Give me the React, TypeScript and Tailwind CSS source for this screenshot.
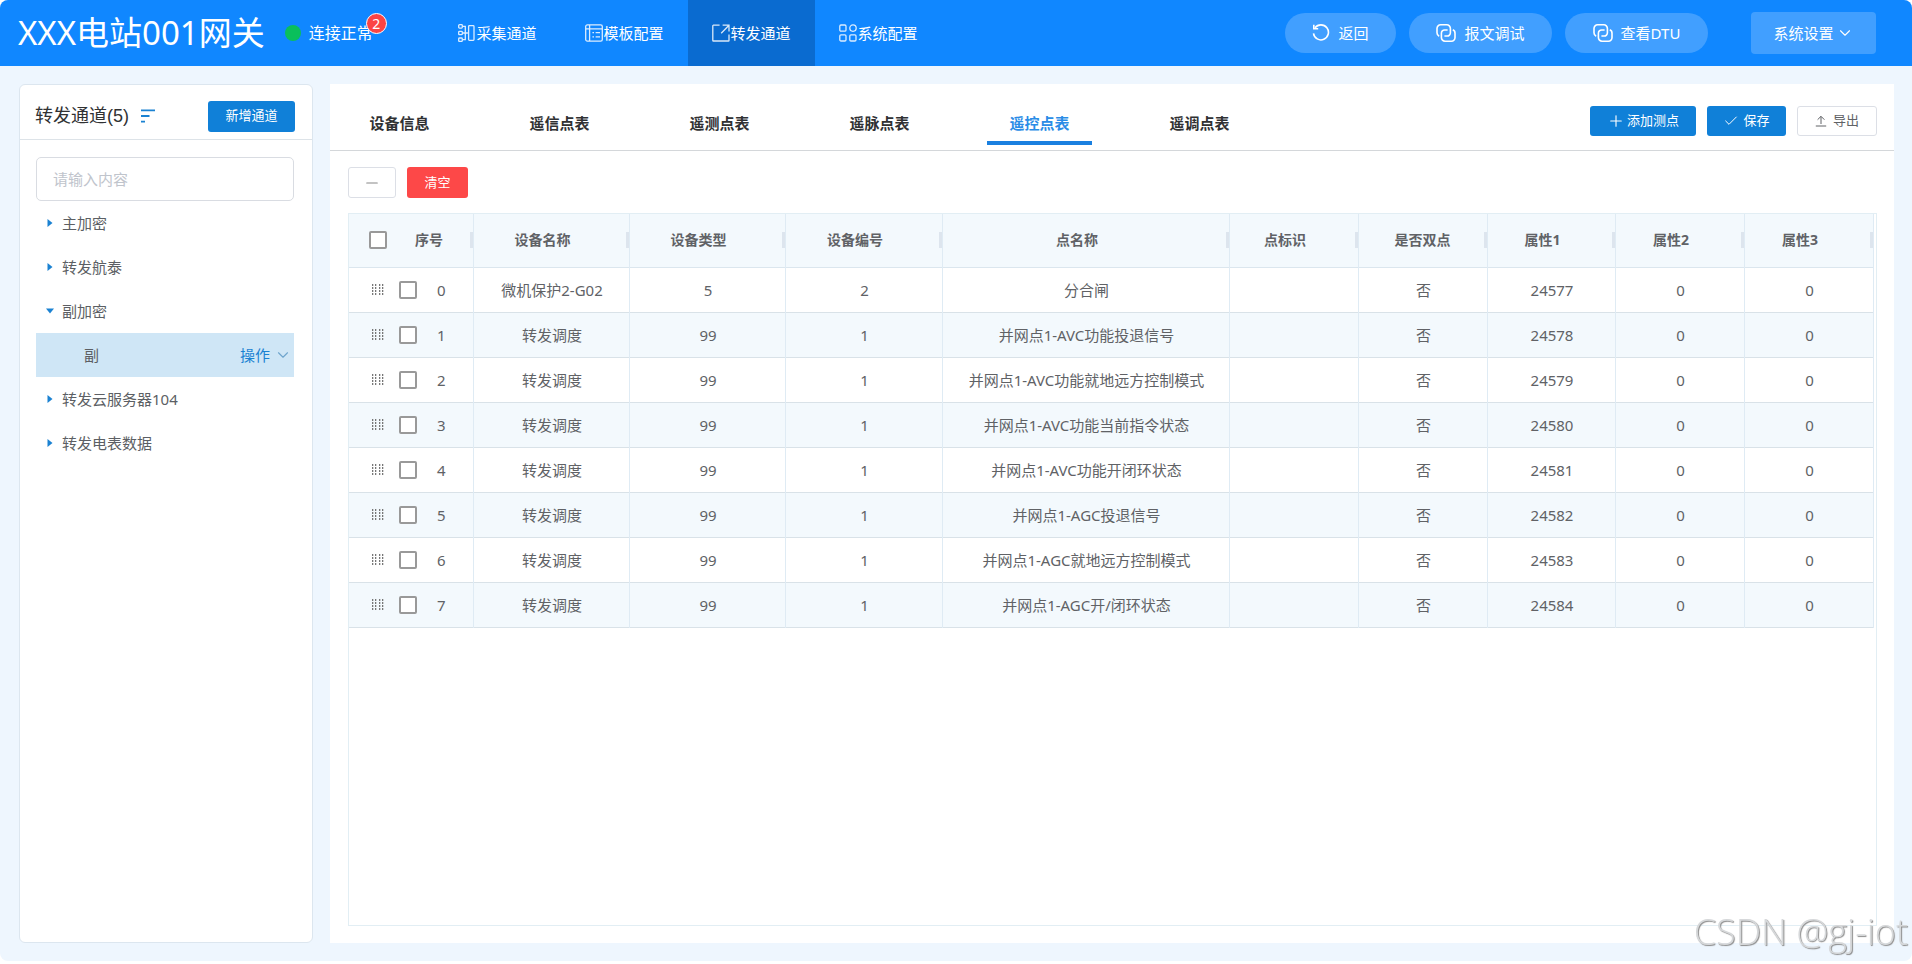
import { Check, ChevronDown, Minus, Plus } from "lucide-react";
import clsx from "clsx";
import type { ReactNode } from "react";

type Point = {
  device: string;
  type: number;
  no: number;
  name: string;
  attr: number;
};

const POINTS: Point[] = [
  { device: "微机保护2-G02", type: 5, no: 2, name: "分合闸", attr: 24577 },
  { device: "转发调度", type: 99, no: 1, name: "并网点1-AVC功能投退信号", attr: 24578 },
  { device: "转发调度", type: 99, no: 1, name: "并网点1-AVC功能就地远方控制模式", attr: 24579 },
  { device: "转发调度", type: 99, no: 1, name: "并网点1-AVC功能当前指令状态", attr: 24580 },
  { device: "转发调度", type: 99, no: 1, name: "并网点1-AVC功能开闭环状态", attr: 24581 },
  { device: "转发调度", type: 99, no: 1, name: "并网点1-AGC投退信号", attr: 24582 },
  { device: "转发调度", type: 99, no: 1, name: "并网点1-AGC就地远方控制模式", attr: 24583 },
  { device: "转发调度", type: 99, no: 1, name: "并网点1-AGC开/闭环状态", attr: 24584 },
];

const COLUMNS = [
  { label: "设备名称", width: "w-[156px]" },
  { label: "设备类型", width: "w-[156px]" },
  { label: "设备编号", width: "w-[157px]" },
  { label: "点名称", width: "w-[287px]" },
  { label: "点标识", width: "w-[129px]" },
  { label: "是否双点", width: "w-[129px]", centered: true },
  { label: "属性1", width: "w-[128px]" },
  { label: "属性2", width: "w-[129px]" },
  { label: "属性3", width: "w-[129px]" },
];

const TABS = ["设备信息", "遥信点表", "遥测点表", "遥脉点表", "遥控点表", "遥调点表"];

const TREE = [
  { label: "主加密" },
  { label: "转发航泰" },
  { label: "副加密", child: "副" },
  { label: "转发云服务器104" },
  { label: "转发电表数据" },
];

function NavIcon({ children }: { children: ReactNode }) {
  return (
    <svg
      viewBox="0 0 18 18"
      className="h-[18px] w-[18px] shrink-0 opacity-85"
      fill="none"
      stroke="currentColor"
      strokeWidth="1.3"
    >
      {children}
    </svg>
  );
}

const NAV = [
  {
    label: "采集通道",
    icon: (
      <NavIcon>
        <rect x="0.7" y="0.7" width="3.6" height="3.4" rx="0.8" />
        <rect x="0.7" y="7.3" width="3.6" height="3.4" rx="0.8" />
        <rect x="0.7" y="14" width="3.6" height="3.4" rx="0.8" />
        <path d="M4.3 2.4h3v13.2h-3M4.3 9h5.6" />
        <rect x="10.6" y="1.6" width="5.4" height="14.8" rx="0.8" />
      </NavIcon>
    ),
  },
  {
    label: "模板配置",
    icon: (
      <NavIcon>
        <rect x="0.7" y="0.9" width="16.6" height="16.2" rx="1.6" />
        <path d="M4.6 1v16M.8 4.8h16.4" />
        <path d="M7.4 8.6h1.6M10.6 8.6h4.4M7.4 12.8h1.6M10.6 12.8h4.4" />
      </NavIcon>
    ),
  },
  {
    label: "转发通道",
    active: true,
    icon: (
      <NavIcon>
        <path d="M7.6 1.2H1.4a.6.6 0 0 0-.6.6v14.6c0 .4.2.6.6.6h15a.6.6 0 0 0 .6-.6v-5.8" />
        <path d="M10.6 1.2H17v6.2M17 1.2 9.2 9.2" />
      </NavIcon>
    ),
  },
  {
    label: "系统配置",
    icon: (
      <NavIcon>
        <rect x="0.8" y="1" width="6.2" height="6.2" rx="1.2" />
        <circle cx="14" cy="4.1" r="3.2" />
        <rect x="0.8" y="10.8" width="6.2" height="6.2" rx="1.2" />
        <rect x="10.8" y="10.8" width="6.2" height="6.2" rx="1.2" />
      </NavIcon>
    ),
  },
];

function BackIcon() {
  return (
    <svg viewBox="0 0 18 18" className="h-[18px] w-[18px]" fill="none" stroke="currentColor" strokeWidth="1.6">
      <path d="M3 3.8A7.500 7.500 0 1 1 1.500 9.400" />
      <path d="M1.800 .8v4h4.400" />
    </svg>
  );
}

function LinkIcon() {
  return (
    <svg viewBox="0 0 20 18" className="h-[18px] w-5" fill="none" stroke="currentColor" strokeWidth="1.6">
      <path d="M3.200 12.200A3.600 3.600 0 0 1 1 8.800V4.400A3.600 3.600 0 0 1 4.600.8h6.200a3.600 3.600 0 0 1 3.600 3.600v4.400a3.200 3.200 0 0 1-3.200 3.200H8.400" />
      <path d="M16.800 5.800A3.600 3.600 0 0 1 19 9.200v4.400a3.600 3.600 0 0 1-3.600 3.600H9a3.600 3.600 0 0 1-3.600-3.600V9.200A3.200 3.200 0 0 1 8.600 6h3" />
    </svg>
  );
}

function DragHandle() {
  return (
    <svg viewBox="0 0 12 12" className="h-3 w-3 fill-[#777]" aria-hidden="true">
      {[0, 3, 7, 10].map((x) =>
        [0, 3, 6, 9].map((y) => <rect key={`${x}-${y}`} x={x} y={y} width="1.3" height="2" />)
      )}
    </svg>
  );
}

function Tick({ label }: { label: string }) {
  return (
    <input
      type="checkbox"
      aria-label={label}
      className="h-[18px] w-[18px] shrink-0 appearance-none rounded-xs border-2 border-[#999] bg-white checked:bg-[#1080d8]"
    />
  );
}

function Header() {
  return (
    <header className="flex h-[66px] shrink-0 items-center rounded-t-lg bg-[#1087ff] pr-9 pl-[18px] text-white">
      <div className="flex w-[416px] shrink-0 items-center">
        <h1 className="text-[33px] leading-10 whitespace-nowrap">XXX电站001网关</h1>
        <span className="ml-5 h-4 w-4 rounded-full bg-[#0abf5b]" />
        <span className="relative ml-2 text-base leading-5">
          连接正常
          <span className="absolute -top-2.5 -right-3.5 flex h-[21px] w-[21px] items-center justify-center rounded-full border border-white bg-[#fb4444] text-sm leading-none">
            2
          </span>
        </span>
      </div>

      <nav className="flex h-full">
        {NAV.map((item) => (
          <a
            key={item.label}
            href="#"
            className={clsx(
              "flex w-[127px] items-center justify-center text-[15px]",
              item.active && "bg-[#0a6bd0]"
            )}
          >
            {item.icon}
            <span>{item.label}</span>
          </a>
        ))}
      </nav>

      <div className="ml-auto flex items-center gap-[13px] text-[15px]">
        <button type="button" className="flex h-10 w-[111px] items-center justify-center gap-2 rounded-full bg-[#419fff]">
          <BackIcon />
          返回
        </button>
        <button type="button" className="flex h-10 w-[143px] items-center justify-center gap-2 rounded-full bg-[#419fff]">
          <LinkIcon />
          报文调试
        </button>
        <button type="button" className="flex h-10 w-[143px] items-center justify-center gap-2 rounded-full bg-[#419fff]">
          <LinkIcon />
          查看DTU
        </button>
        <button type="button" className="ml-[30px] flex h-[42px] w-[125px] items-center justify-center gap-0.5 rounded-sm bg-[#419fff]">
          系统设置
          <ChevronDown className="h-[18px] w-[18px]" strokeWidth={1.5} />
        </button>
      </div>
    </header>
  );
}

function Sidebar() {
  return (
    <aside className="flex w-[294px] shrink-0 flex-col rounded-md border border-[#dce6ef] bg-white">
      <div className="flex h-[55px] items-center border-b border-[#dde3e8] pt-2 pr-[17px] pl-[15px]">
        <h2 className="font-['Liberation_Sans','Noto_Sans_CJK_SC',sans-serif] text-lg text-[#303133]">转发通道(5)</h2>
        <svg viewBox="0 0 14 14" className="ml-3 h-3.5 w-3.5" fill="none" stroke="#1b82d2" strokeWidth="1.8">
          <path d="M0 1.400h14M0 7h8.500M0 12.600h4" />
        </svg>
        <button type="button" className="ml-auto h-[31px] w-[87px] rounded-[3px] bg-[#1080d8] text-[13px] text-white">
          新增通道
        </button>
      </div>

      <div className="pt-[17px] pr-[18px] pl-4 text-[15px] text-[#5c5f64]">
        <input
          type="text"
          aria-label="搜索通道"
          placeholder="请输入内容"
          className="h-11 w-full rounded-[5px] border border-[#d9dce2] px-4 placeholder:text-[#c0c4cc]"
        />
        <ul>
          {TREE.map((node) => (
            <li key={node.label}>
              <button type="button" className="flex h-11 w-full items-center gap-2 pl-2.5 text-left">
                <svg viewBox="0 0 8 8" className={clsx("h-2 w-2 fill-[#1b82d2]", node.child && "rotate-90")}>
                  <path d="M1.500 0 6.500 4l-5 4z" />
                </svg>
                {node.label}
              </button>
              {node.child && (
                <div className="flex h-11 items-center justify-between bg-[#cfe6f6] pr-0.5 pl-12">
                  <span>{node.child}</span>
                  <button type="button" className="flex items-center gap-1 text-[#1b82d2]">
                    操作
                    <ChevronDown className="h-[18px] w-[18px] text-[#6fa5cd]" strokeWidth={1.5} />
                  </button>
                </div>
              )}
            </li>
          ))}
        </ul>
      </div>
    </aside>
  );
}

function PointTable() {
  return (
    <div className="flex-1 border border-[#e2eef4] pr-[3px]">
      <table className="w-full table-fixed border-collapse text-center text-[15px] text-[#606266]">
        <thead>
          <tr className="h-[53px] border-b border-[#dbe6ee] bg-[#f3f9fd] text-sm">
            <th className="w-[124px] border-r border-[#dfebf4] p-0">
              <div className="flex items-center pl-5">
                <Tick label="全选" />
                <span className="ml-7">序号</span>
                <span className="ml-auto h-4 w-[3px] bg-[#dde5ee]" />
              </div>
            </th>
            {COLUMNS.map((col) => (
              <th key={col.label} className={clsx(col.width, "border-r border-[#dfebf4] p-0")}>
                <div className="flex items-center">
                  <span className={clsx("flex-1", col.centered ? "pl-[3px]" : "pr-[14px]")}>{col.label}</span>
                  <span className="h-4 w-[3px] bg-[#dde5ee]" />
                </div>
              </th>
            ))}
          </tr>
        </thead>
        <tbody className="[&_td]:border-r [&_td]:border-[#dfebf4] [&_td]:p-0 [&_td+td]:pt-0.5 [&_td+td]:pl-0.5">
          {POINTS.map((p, i) => (
            <tr key={p.attr} className="h-[45px] border-b border-[#d9e2e8] even:bg-[#f3f9fd]">
              <td>
                <div className="flex items-center pl-[23px]">
                  <DragHandle />
                  <span className="ml-[15px] flex">
                    <Tick label={`选择第${i}行`} />
                  </span>
                  <span className="ml-5 pt-0.5">{i}</span>
                </div>
              </td>
              <td>{p.device}</td>
              <td>{p.type}</td>
              <td>{p.no}</td>
              <td>{p.name}</td>
              <td></td>
              <td>否</td>
              <td>{p.attr}</td>
              <td>0</td>
              <td>0</td>
            </tr>
          ))}
        </tbody>
      </table>
    </div>
  );
}

export default function App() {
  return (
    <div className="flex min-h-screen flex-col bg-white pb-[3px] font-['Noto_Sans','Noto_Sans_CJK_SC',sans-serif]">
      <div className="flex flex-1 flex-col rounded-lg bg-[#eef6fe]">
        <Header />

        <div className="flex flex-1 gap-[17px] pt-[18px] pr-[18px] pb-[18px] pl-[19px]">
          <Sidebar />

          <main className="flex min-w-0 flex-1 flex-col bg-white">
            <div className="flex h-[67px] items-end justify-between border-b border-[#d4d7da] pr-[17px] pl-[17px]">
              <div role="tablist" className="flex gap-[55px] pb-[5px]">
                {TABS.map((tab) => {
                  const active = tab === "遥控点表";
                  return (
                    <button
                      key={tab}
                      type="button"
                      role="tab"
                      aria-selected={active}
                      className={clsx(
                        "h-11 w-[105px] border-b-4 pt-1 text-[15px] font-bold",
                        active ? "border-[#1a80e0] text-[#2a8ce6]" : "border-transparent text-[#303133]"
                      )}
                    >
                      {tab}
                    </button>
                  );
                })}
              </div>
              <div className="flex gap-[11px] pb-3.5 text-[13px]">
                <button type="button" className="flex h-[30px] w-[106px] items-center justify-center gap-0.5 rounded-[3px] bg-[#1080d8] text-white">
                  <Plus className="h-[18px] w-[18px]" strokeWidth={1.5} />
                  添加测点
                </button>
                <button type="button" className="flex h-[30px] w-[79px] items-center justify-center gap-1 rounded-[3px] bg-[#1080d8] text-white">
                  <Check className="h-4 w-4" strokeWidth={1.5} />
                  保存
                </button>
                <button type="button" className="flex h-[30px] w-20 items-center justify-center gap-1.5 rounded-[3px] border border-[#dcdfe6] text-[#606266]">
                  <svg viewBox="0 0 12 12" className="h-3 w-3" fill="none" stroke="currentColor">
                    <path d="M.8 11h10.400M6 9V1.500M2.600 4.700 6 1.300l3.400 3.400" />
                  </svg>
                  导出
                </button>
              </div>
            </div>

            <div className="flex flex-1 flex-col gap-[15px] pt-4 pr-[17px] pb-[17px] pl-[18px]">
              <div className="flex gap-[11px] text-[13px]">
                <button type="button" aria-label="删除" className="flex h-[31px] w-12 items-center justify-center rounded-[3px] border border-[#dcdfe6] text-[#888]">
                  <Minus className="h-[18px] w-[18px]" strokeWidth={1.5} />
                </button>
                <button type="button" className="h-[31px] w-[61px] rounded-[3px] bg-[#fd4848] text-white">
                  清空
                </button>
              </div>
              <PointTable />
            </div>
          </main>
        </div>
      </div>

      <p className="pointer-events-none fixed right-1 bottom-3 font-['Open_Sans',sans-serif] text-4xl leading-10 font-light text-[#d6d8da] [text-shadow:1px_1px_1px_#8a8a8a]">
        CSDN @gj-iot
      </p>
    </div>
  );
}
